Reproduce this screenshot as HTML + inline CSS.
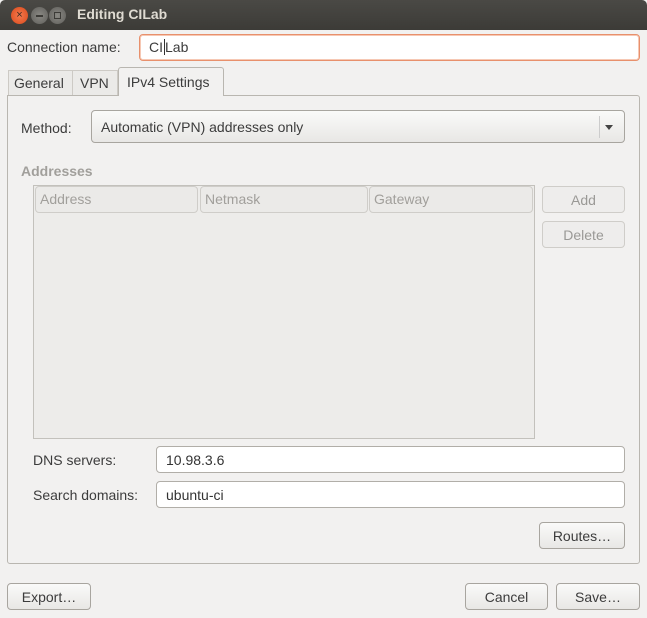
<!DOCTYPE html><html><head><style>
body{margin:0;width:647px;height:618px;background:#f2f1f0;font-family:"Liberation Sans","DejaVu Sans",sans-serif;font-size:14px;color:#3c3c3c;position:relative;overflow:hidden}
.a{position:absolute}
.t{white-space:nowrap}
.btn{position:absolute;border:1px solid #a8a59f;border-radius:4px;background:linear-gradient(#fafaf9,#e8e7e5);text-align:center;box-sizing:border-box}
.ent{position:absolute;border:1px solid #b1aea8;border-radius:4px;background:#fff;box-sizing:border-box;padding-left:9px}
.dis{border-color:#cfcdc9;background:#eeedec;color:#9a9996}
.hd{position:absolute;top:186px;height:27px;border:1px solid #cfcdc9;border-radius:4px;background:#ebeae8;color:#a19f9b;box-sizing:border-box;padding:4px 0 0 4px}
</style></head><body>
<div class="a" style="left:0;top:0;width:647px;height:30px;background:linear-gradient(#4a4945,#3c3b37);border-radius:5px 5px 0 0"></div>
<div class="a" style="left:11px;top:7px;width:17px;height:17px;border-radius:50%;background:radial-gradient(#f47a4f,#d9491a);color:#3a2a20;font-size:11px;text-align:center;line-height:17px">×</div>
<div class="a" style="left:31px;top:7px;width:17px;height:17px;border-radius:50%;background:radial-gradient(#8a8984,#5f5e5a);"><div class="a" style="left:5px;top:8px;width:7px;height:1.5px;background:#3c3b37"></div></div>
<div class="a" style="left:49px;top:7px;width:17px;height:17px;border-radius:50%;background:radial-gradient(#8a8984,#5f5e5a);"><div class="a" style="left:5px;top:5px;width:5px;height:5px;border:1px solid #3c3b37"></div></div>
<div class="a t" style="left:77px;top:6px;color:#dfdbd2;font-weight:bold;font-size:14px">Editing CILab</div>

<div class="a t" style="left:7px;top:39px">Connection name:</div>
<div class="ent" style="left:139px;top:34px;width:501px;height:27px;border-color:#e8906c;box-shadow:0 0 0 1px #f6c8b4 inset;padding-top:4px">CI<span style="border-left:1px solid #333;margin-left:1px"></span>Lab</div>

<div class="a" style="left:7px;top:95px;width:633px;height:469px;border:1px solid #b9b6b0;border-radius:0 3px 3px 3px;box-sizing:border-box"></div>
<div class="a" style="left:8px;top:70px;width:65px;height:25px;border:1px solid #cdcac5;border-bottom:none;box-sizing:border-box;background:#ebeae8"></div>
<div class="a t" style="left:14px;top:75px">General</div>
<div class="a" style="left:73px;top:70px;width:45px;height:25px;border:1px solid #cdcac5;border-left:none;border-bottom:none;box-sizing:border-box;background:#ebeae8"></div>
<div class="a t" style="left:80px;top:75px">VPN</div>
<div class="a" style="left:118px;top:67px;width:106px;height:29px;border:1px solid #b9b6b0;border-bottom:none;border-radius:3px 3px 0 0;box-sizing:border-box;background:#f2f1f0"></div>
<div class="a t" style="left:127px;top:74px">IPv4 Settings</div>

<div class="a t" style="left:21px;top:120px">Method:</div>
<div class="btn" style="left:91px;top:110px;width:534px;height:33px;text-align:left;padding:8px 0 0 9px">Automatic (VPN) addresses only</div>
<div class="a" style="left:599px;top:116px;width:1px;height:22px;background:#ccc"></div>
<div class="a" style="left:605px;top:125px;border-left:4px solid transparent;border-right:4px solid transparent;border-top:5px solid #444"></div>

<div class="a t" style="left:21px;top:163px;font-weight:bold;color:#a19f9b">Addresses</div>
<div class="a" style="left:33px;top:185px;width:502px;height:254px;border:1px solid #c3c1bc;background:#edecea;box-sizing:border-box"></div>
<div class="hd" style="left:35px;width:163px">Address</div>
<div class="hd" style="left:200px;width:168px">Netmask</div>
<div class="hd" style="left:369px;width:164px">Gateway</div>
<div class="btn dis" style="left:542px;top:186px;width:83px;height:27px;padding-top:5px">Add</div>
<div class="btn dis" style="left:542px;top:221px;width:83px;height:27px;padding-top:5px">Delete</div>

<div class="a t" style="left:33px;top:452px">DNS servers:</div>
<div class="ent" style="left:156px;top:446px;width:469px;height:27px;padding-top:5px;color:#333">10.98.3.6</div>
<div class="a t" style="left:33px;top:487px">Search domains:</div>
<div class="ent" style="left:156px;top:481px;width:469px;height:27px;padding-top:5px;color:#333">ubuntu-ci</div>
<div class="btn" style="left:539px;top:522px;width:86px;height:27px;padding-top:5px">Routes…</div>

<div class="btn" style="left:7px;top:583px;width:84px;height:27px;padding-top:5px">Export…</div>
<div class="btn" style="left:465px;top:583px;width:83px;height:27px;padding-top:5px">Cancel</div>
<div class="btn" style="left:556px;top:583px;width:84px;height:27px;padding-top:5px">Save…</div>
</body></html>
